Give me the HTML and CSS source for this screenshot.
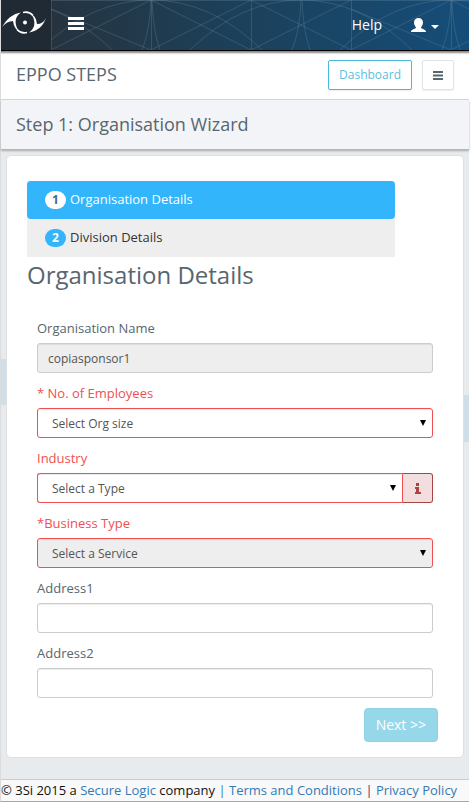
FILE: index.html
```
<!DOCTYPE html>
<html lang="en">
<head>
<meta charset="utf-8">
<meta name="viewport" content="width=device-width, initial-scale=1">
<title>EPPO STEPS</title>
<link rel="stylesheet" href="styles.css">
</head>
<body>
<div class="page">
  <header class="topbar">
    <svg class="pattern" width="100%" height="50" aria-hidden="true">
      <defs>
        <pattern id="web" width="300" height="50" patternUnits="userSpaceOnUse">
          <path d="M0 .5H300M.5 0V50M100.500 0V50M200.500 0V50"/>
          <path d="M0 50L100 0L200 50L300 0M100 50L200 0L300 50M0 9L100 50"/>
          <path d="M-11 50Q40 0 100 0Q160 0 211 50M139 50Q190 0 250 0Q310 0 361 50M-161 50Q-110 0 -50 0Q10 0 61 50M289 50Q340 0 400 0"/>
          <path d="M100 0Q99 30 91 50M101 0Q102 30 109 50M250 0Q249 30 241 50M251 0Q252 30 259 50"/>
        </pattern>
      </defs>
      <rect width="100%" height="50" fill="url(#web)"/>
    </svg>
    <a class="logo" href="#" aria-label="Home">
      <svg width="46" height="24" viewBox="0 0 46 24">
        <path d="M1 16C6 8 11 3 20 1.500C15 5 14 9 15 14Q16 19 20 21.500Q13 19 12 10Q6 10 1 16Z"/>
        <path d="M45 7C42 15 37 20 28 21.500C33 18 34 14 33 9Q32 4 28 2Q35 4 36 13Q42 13 45 7Z"/>
        <path class="ring" d="M22 1.500Q28 0 32 4.500M26 21.500Q20 23 16 18.500"/>
        <circle cx="24" cy="11.500" r="2"/>
      </svg>
    </a>
    <button class="icon-button menu" type="button" aria-label="Toggle menu">
      <svg width="16" height="13"><path d="M0 0h16v3H0zM0 5h16v3H0zM0 10h16v3H0z"/></svg>
    </button>
    <nav class="topnav">
      <a href="#">Help</a>
      <button class="icon-button" type="button" aria-label="Account">
        <svg width="28" height="15" viewBox="0 0 28 15">
          <path d="M7.500 0C10 0 12 1.500 12 4.500C12 7 10.500 8.500 10 9.500C10 11 15 11 15 14H0C0 11 5 11 5 9.500C4.500 8.500 3 7 3 4.500C3 1.500 5 0 7.500 0ZM20 7h8l-4 4z"/>
        </svg>
      </button>
    </nav>
  </header>

  <div class="titlebar">
    <h1>EPPO STEPS</h1>
    <button class="tool dashboard" type="button">Dashboard</button>
    <button class="tool more" type="button" aria-label="More">
      <svg width="10" height="9"><path d="M0 0h10v2H0zM0 3.500h10v2H0zM0 7h10v2H0z"/></svg>
    </button>
  </div>
  <h2 class="subtitle">Step 1: Organisation Wizard</h2>

  <main>
    <section class="panel">
      <ol class="steps">
        <li class="active"><a href="#"><span class="badge">1</span><span class="step-name">Organisation Details</span></a></li>
        <li><a href="#"><span class="badge">2</span><span class="step-name">Division Details</span></a></li>
      </ol>
      <h3>Organisation Details</h3>
      <form>
        <label for="name">Organisation Name</label>
        <input class="control" id="name" type="text" value="copiasponsor1" disabled>

        <label class="error" for="size">* No. of Employees</label>
        <div class="select"><select class="control" id="size"><option>Select Org size</option></select></div>

        <label class="error" for="industry">Industry</label>
        <div class="group">
          <div class="select"><select class="control" id="industry"><option>Select a Type</option></select></div>
          <button class="addon" type="button" aria-label="Information">
            <svg width="6" height="11"><path d="M1 0h3v3H1zM0 4h4v5h2v2H0V9h1V6H0z"/></svg>
          </button>
        </div>

        <label class="error" for="business">*Business Type</label>
        <div class="select"><select class="control" id="business" disabled><option>Select a Service</option></select></div>

        <label for="address1">Address1</label>
        <input class="control" id="address1" type="text">

        <label for="address2">Address2</label>
        <input class="control" id="address2" type="text">
      </form>
      <div class="actions"><button class="next" type="button" disabled>Next &gt;&gt;</button></div>
    </section>
  </main>

  <footer>© 3Si 2015 a <a href="#">Secure Logic</a> company <span class="bar">|</span> <a href="#">Terms and Conditions</a> <span class="bar dark">|</span> <a href="#">Privacy Policy</a></footer>
</div>
</body>
</html>
```
FILE: styles.css
```
* { box-sizing: border-box; }
body {
  margin: 0;
  background: #fff;
  color: #58666e;
  font: 13px/20px "Open Sans", sans-serif;
}
.page {
  margin-right: 2px;
  border-left: 1px solid #dcdcdc;
  border-bottom: 1px solid #a8a8a8;
}
h1, h2, h3 { margin: 0; font-weight: 400; }
a { color: #337ab7; text-decoration: none; }
button, input, select { font: inherit; color: inherit; }

.topbar {
  position: relative;
  display: flex;
  align-items: center;
  height: 51px;
  overflow: hidden;
  border-bottom: 1px solid #000;
  background: linear-gradient(90deg, #26333f 50px, #1c4059 230px, #154d79);
}
.pattern { position: absolute; left: 50px; top: 0; }
.pattern path { fill: none; stroke: #6b8ba3; stroke-opacity: .3; }
.logo {
  display: flex;
  align-items: center;
  width: 50px;
  height: 50px;
  padding-bottom: 4px;
  background: #1f2a34;
}
.logo svg { fill: #fff; }
.logo .ring { fill: none; stroke: #fff; stroke-width: 1.5; }
.icon-button {
  position: relative;
  display: flex;
  padding: 0;
  border: 0;
  background: none;
  cursor: pointer;
}
.icon-button svg { fill: #fff; }
.menu { margin-left: 17px; margin-bottom: 3px; }
.topnav {
  position: relative;
  display: flex;
  align-items: center;
  gap: 29px;
  margin-left: auto;
  padding-right: 30px;
}
.topnav a { color: #fff; font-size: 14px; }

.titlebar {
  display: flex;
  align-items: center;
  gap: 10px;
  height: 49px;
  padding: 0 15px;
  border-bottom: 1px solid #d5d8db;
  background: #fff;
  box-shadow: inset 0 4px 2px -2px #888;
}
h1, h2 { font-size: 18px; line-height: 24px; }
h1 { margin-right: auto; padding-bottom: 2px; }
.tool {
  height: 30px;
  padding: 0 10px;
  border: 1px solid #dee5e7;
  border-radius: 2px;
  background: #fff;
  box-shadow: 0 1px 1px rgba(90, 90, 90, .1);
  font-size: 12px;
}
.dashboard { border-color: #46b8da; color: #5bc0de; }
.more { width: 32px; }
.more svg { display: block; fill: #58666e; }
.subtitle {
  padding: 12px 15px 13px;
  border-bottom: 1px solid #b3b6b8;
  background: #f3f4f7;
  box-shadow: 0 1px 2px #aaa;
  position: relative;
}

main {
  padding: 5px 5px 21px;
  background:
    linear-gradient(#cfdfe9, #cfdfe9) left 0 top 209px / 10px 46px no-repeat,
    linear-gradient(#cfdfe9, #cfdfe9) right 0 top 245px / 10px 47px no-repeat,
    #e8ebee;
}
.panel {
  padding: 25px 20px 15px;
  border: 1px solid #dee1e4;
  border-radius: 5px;
  background: #fff;
}
.steps {
  margin: 0 48px 0 0;
  padding: 0;
  list-style: none;
  background: #eee;
}
.steps a {
  display: flex;
  align-items: center;
  gap: 4px;
  height: 38px;
  padding: 0 18px;
  color: #333;
}
.steps .active a { border-radius: 4px; background: #33b5fc; color: #fff; }
.step-name { padding-bottom: 2px; }
.badge {
  width: 21px;
  border-radius: 10px;
  background: #33b5fc;
  color: #fff;
  font-size: 12px;
  font-weight: 700;
  line-height: 18px;
  text-align: center;
}
.active .badge { background: #fff; color: #456b8b; }
h3 { font-size: 24px; line-height: 36px; }

form { padding: 25px 10px 0; }
label { display: block; margin-bottom: 5px; }
label.error { color: #f05050; }
.control {
  display: block;
  width: 100%;
  height: 30px;
  margin: 0 0 10px;
  padding: 0 10px;
  border: 1px solid #ccc;
  border-radius: 3px;
  outline: 0;
  appearance: none;
  background: #fff;
  box-shadow: inset 0 1px 1px rgba(0, 0, 0, .075);
  color: #555;
  font-size: 12px;
  opacity: 1;
}
.control:disabled { background: #eee; }
.select { position: relative; flex: 1; }
.select .control { padding-top: 2px; padding-left: 14px; border-color: #f05050; }
.select::after {
  content: "";
  position: absolute;
  top: 12px;
  right: 7px;
  border: 3px solid transparent;
  border-top: 6px solid #000;
  border-bottom: 0;
}
.group { display: flex; }
.group .control { border-right: 0; border-radius: 3px 0 0 3px; }
.group .select::after { right: 6px; }
.addon {
  display: flex;
  align-items: center;
  justify-content: center;
  width: 31px;
  height: 30px;
  padding: 0;
  border: 1px solid #a94442;
  border-left-color: #f05050;
  border-radius: 0 3px 3px 0;
  background: #f2dede;
}
.addon svg { fill: #a94442; }
.actions { display: flex; justify-content: flex-end; padding-right: 5px; }
.next {
  height: 34px;
  padding: 0 11px;
  border: 1px solid #8fd2e6;
  border-radius: 4px;
  background: #96d8ea;
  color: #fff;
  font-size: 14px;
  font-weight: 500;
}
footer {
  border-top: 1px solid #ccc;
  background: #f9f9f9;
  color: #111;
  line-height: 21px;
  white-space: nowrap;
}
.bar { color: #337ab7; }
.bar.dark { color: #551a6b; }
```
